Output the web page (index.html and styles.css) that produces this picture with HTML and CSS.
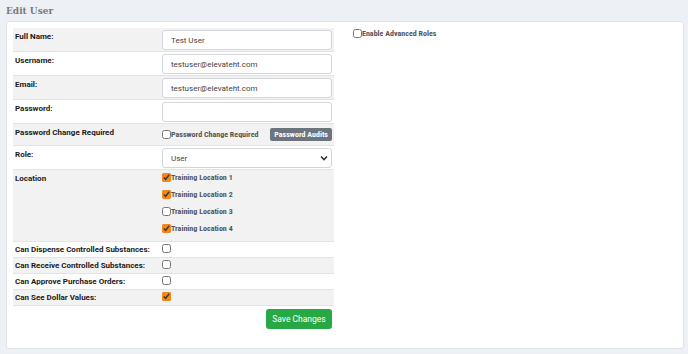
FILE: index.html
```html
<!DOCTYPE html>
<html lang="en">
<head>
    <meta charset="UTF-8">
    <title>Edit User</title>
    <link rel="stylesheet" href="styles.css">
</head>
<body>
    <!-- Page Title -->
    <h3 class="page-title">Edit User</h3>

    <div class="panel">
        <div class="user-form">
            <table class="form-table">
                <tr>
                    <td class="label">Full Name:</td>
                    <td><input type="text" class="field" value="Test User"></td>
                </tr>
                <tr>
                    <td class="label">Username:</td>
                    <td><input type="text" class="field" value="testuser@elevateht.com"></td>
                </tr>
                <tr>
                    <td class="label">Email:</td>
                    <td><input type="text" class="field" value="testuser@elevateht.com"></td>
                </tr>
                <tr>
                    <td class="label">Password:</td>
                    <td><input type="password" class="field"></td>
                </tr>
                <tr class="row-pcr">
                    <td class="label">Password Change Required</td>
                    <td>
                        <div class="pcr">
                            <label class="check"><input type="checkbox">Password Change Required</label>
                            <button type="button" class="btn-audits">Password Audits</button>
                        </div>
                    </td>
                </tr>
                <tr>
                    <td class="label">Role:</td>
                    <td>
                        <div class="select-wrap">
                            <select class="field">
                                <option>User</option>
                            </select>
                            <svg class="chevron" width="8" height="6" viewBox="0 0 8 6">
                                <path d="M1 1.5 L4 4.5 L7 1.5" fill="none" stroke="#333" stroke-width="1.6"/>
                            </svg>
                        </div>
                    </td>
                </tr>
                <tr class="row-locations">
                    <td class="label">Location</td>
                    <td>
                        <label class="check loc"><input type="checkbox" checked>Training Location 1</label>
                        <label class="check loc"><input type="checkbox" checked>Training Location 2</label>
                        <label class="check loc"><input type="checkbox">Training Location 3</label>
                        <label class="check loc"><input type="checkbox" checked>Training Location 4</label>
                    </td>
                </tr>
                <tr class="row-small">
                    <td class="label">Can Dispense Controlled Substances:</td>
                    <td><input type="checkbox" class="box"></td>
                </tr>
                <tr class="row-small">
                    <td class="label">Can Receive Controlled Substances:</td>
                    <td><input type="checkbox" class="box"></td>
                </tr>
                <tr class="row-small">
                    <td class="label">Can Approve Purchase Orders:</td>
                    <td><input type="checkbox" class="box"></td>
                </tr>
                <tr class="row-small">
                    <td class="label">Can See Dollar Values:</td>
                    <td><input type="checkbox" class="box" checked></td>
                </tr>
            </table>
            <div class="actions">
                <button type="submit" class="btn-save">Save Changes</button>
            </div>
        </div>

        <div class="side">
            <label class="check"><input type="checkbox">Enable Advanced Roles</label>
        </div>
    </div>
</body>
</html>
```

FILE: styles.css
```css
/* General Styles */
body {
    margin: 0;
    padding: 0 6px;
    background-color: #edf1f5;
    font-family: 'Roboto', 'Liberation Sans', sans-serif;
    color: #222;
}

.page-title {
    margin: 0;
    padding-top: 2px;
    height: 19px;
    line-height: 19px;
    font-family: 'DejaVu Serif', 'Liberation Serif', serif;
    font-size: 9px;
    font-weight: bold;
    color: #7a7a7a;
}

.panel {
    display: flex;
    gap: 19px;
    background-color: #fff;
    border: 1px solid #dfe3e8;
    border-radius: 3px;
    padding: 6px 6px 19px;
    width: 664px;
}

.user-form {
    width: 321px;
}

/* Table */
.form-table {
    width: 100%;
    border-collapse: collapse;
    font-size: 8px;
    line-height: 10px;
}

.form-table tr {
    border-top: 1px solid #e4e4e4;
}

.form-table tr:first-child {
    border-top: none;
}

.form-table tr:nth-child(odd) {
    background-color: #f2f2f2;
}

.form-table tr:last-child {
    border-bottom: 1px solid #e4e4e4;
}

.form-table td {
    padding: 2px 2px 1px 0;
    vertical-align: top;
}

.form-table td.label {
    width: 147px;
    padding: 4px 0 0 2px;
    font-weight: bold;
    color: #1a1a1a;
}

.field {
    display: block;
    width: 170px;
    height: 20px;
    box-sizing: border-box;
    border: 1px solid #d2d6da;
    border-radius: 3px;
    padding: 0 8px;
    font-family: 'Roboto', sans-serif;
    font-size: 8px;
    color: #444;
    background-color: #fff;
}

.select-wrap {
    position: relative;
    width: 170px;
}

select.field {
    appearance: none;
    padding: 0 8px;
}

.chevron {
    position: absolute;
    right: 4px;
    top: 7px;
    pointer-events: none;
}

/* Checkboxes */
.check {
    display: flex;
    align-items: center;
    font-family: 'Roboto Condensed', 'Liberation Sans Narrow', 'Roboto', sans-serif;
    font-stretch: condensed;
    font-size: 8px;
    font-weight: bold;
    color: #555;
}

.check input,
.box {
    display: block;
    width: 9px;
    height: 9px;
    margin: 0;
    accent-color: #f7861b;
}

.row-locations td {
    padding-top: 1px;
    padding-bottom: 6px;
}

.loc {
    height: 13px;
    margin-bottom: 4px;
}

.loc:last-child {
    margin-bottom: 0;
}

.pcr {
    display: flex;
    align-items: center;
    justify-content: space-between;
    height: 17px;
}

.row-pcr td {
    padding-bottom: 2px;
}

.btn-audits {
    background-color: #6c757d;
    color: #fff;
    border: none;
    border-radius: 2px;
    height: 13px;
    padding: 0 4px;
    font-family: 'Roboto Condensed', 'Liberation Sans Narrow', 'Roboto', sans-serif;
    font-size: 8px;
    font-weight: bold;
}

.row-small td {
    padding: 2px 0 3px;
}

.row-small td.label {
    padding: 3px 0 2px 2px;
}

/* Actions */
.actions {
    display: flex;
    justify-content: flex-end;
    padding: 3px 2px 0 0;
}

.btn-save {
    background-color: #28a745;
    color: #fff;
    border: none;
    border-radius: 3px;
    width: 66px;
    height: 20px;
    padding: 0;
    font-family: 'Roboto', sans-serif;
    font-size: 8.5px;
}

.side {
    padding-top: 1px;
}
```
